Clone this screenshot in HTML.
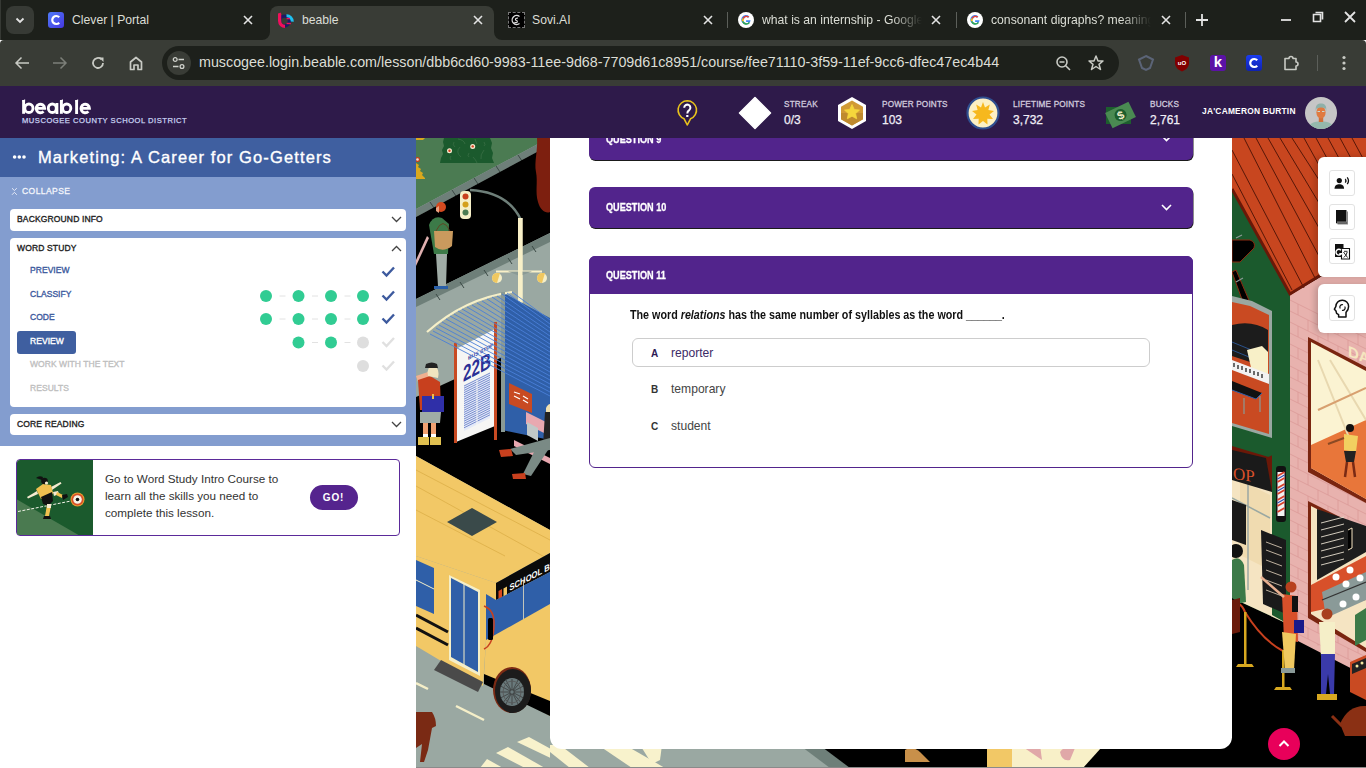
<!DOCTYPE html>
<html><head><meta charset="utf-8">
<style>
*{margin:0;padding:0;box-sizing:border-box}
html,body{width:1366px;height:768px;overflow:hidden;background:#fff;font-family:"Liberation Sans",sans-serif}
.a{position:absolute}
#tabs{left:0;top:0;width:1366px;height:40px;background:#1d201b;box-shadow:inset 1px 0 0 #363934}
#tool{left:0;top:40px;width:1366px;height:46px;background:#393c36;border-radius:4px 4px 0 0}
.tt{position:absolute;top:11px;font-size:12.2px;color:#dcded6;white-space:nowrap;line-height:18px}
.tx{position:absolute;top:13px;width:14px;height:14px}
.sep{position:absolute;top:12px;width:1px;height:16px;background:#5c5f5a}
#hdr{left:0;top:86px;width:1366px;height:52px;background:#2e1a4a}
.lbl{position:absolute;font-size:8.2px;color:#d0c9dc;letter-spacing:0.17px;-webkit-text-stroke:0.3px currentColor;line-height:10px;white-space:nowrap}
.val{position:absolute;font-size:12px;color:#f0eef6;-webkit-text-stroke:0.25px #f0eef6;line-height:14px;white-space:nowrap}
.card{font-size:8.5px;line-height:10px;color:#222;letter-spacing:0.15px;-webkit-text-stroke:0.35px #222;white-space:nowrap}
.sub{font-size:8.5px;line-height:10px;color:#3d5a9e;letter-spacing:0.05px;-webkit-text-stroke:0.35px currentColor;white-space:nowrap}
.qh{left:589px;width:604px;background:#52248c;border-radius:6px;box-shadow:0.5px 1px 0 #1a1a1a}
.qt{left:606px;font-size:11px;line-height:12px;font-weight:bold;color:#fff;-webkit-text-stroke:0.3px #fff;white-space:nowrap;transform:scaleX(0.83);transform-origin:0 0}
.optl{font-size:10px;line-height:10px;font-weight:bold;color:#333}
.opt{font-size:12.1px;line-height:16px;color:#444;white-space:nowrap}
.rb{left:1329px;width:26px;height:26px;border:1px solid #e2e2e2;border-radius:3px;background:#fff}
</style></head><body>
<!-- TAB STRIP -->
<div id="tabs" class="a">
  <div class="a" style="left:6px;top:6px;width:28px;height:28px;border-radius:8px;background:#373a35"></div>
  <svg class="a" style="left:13px;top:13px" width="14" height="14" viewBox="0 0 14 14"><path d="M3.5 5.5 L7 9 L10.5 5.5" stroke="#e3e3e3" stroke-width="1.8" fill="none"/></svg>
  <!-- tab1 -->
  <div class="a" style="left:48px;top:12px;width:16px;height:16px;border-radius:3px;background:linear-gradient(135deg,#4f7cf8,#4636e0)"></div>
  <svg class="a" style="left:48px;top:12px" width="16" height="16" viewBox="0 0 16 16"><path d="M11.2 5.3 A4 4 0 1 0 11.2 10.7" stroke="#fff" stroke-width="2.2" fill="none"/></svg>
  <div class="tt" style="left:72px">Clever | Portal</div>
  <svg class="tx" style="left:241px" viewBox="0 0 14 14"><path d="M3 3L11 11M11 3L3 11" stroke="#e3e3e3" stroke-width="1.6"/></svg>
  <!-- active tab -->
  <div class="a" style="left:270px;top:6px;width:224px;height:40px;border-radius:8px 8px 0 0;background:#393c36"></div>
  <svg class="a" style="left:262px;top:32px" width="8" height="8" viewBox="0 0 8 8"><path d="M0 8 A8 8 0 0 0 8 0 L8 8Z" fill="#393c36"/></svg>
  <svg class="a" style="left:494px;top:32px" width="8" height="8" viewBox="0 0 8 8"><path d="M8 8 A8 8 0 0 1 0 0 L0 8Z" fill="#393c36"/></svg>
  <svg class="a" style="left:274px;top:8px" width="26" height="24" viewBox="0 0 26 24"><circle cx="10.5" cy="13" r="4.9" stroke="#1c1a66" stroke-width="3.2" fill="none"/><path d="M5.6 5.5V13A5.4 5.4 0 0 0 11 18.4" stroke="#f0105a" stroke-width="3.2" fill="none"/><path d="M4 6L6.5 4.6L7.3 6.5Z" fill="#f0105a"/><path d="M12.5 7.8A5.6 5.6 0 0 1 18.3 13.6" stroke="#1ec0f0" stroke-width="3" fill="none"/><rect x="12.6" y="9.9" width="3.4" height="1.4" fill="#f0105a"/><rect x="12.6" y="14.8" width="4.3" height="1.4" fill="#f0105a"/></svg>
  <div class="tt" style="left:302px">beable</div>
  <svg class="tx" style="left:471px" viewBox="0 0 14 14"><path d="M3 3L11 11M11 3L3 11" stroke="#e3e3e3" stroke-width="1.6"/></svg>
  <!-- tab3 -->
  <div class="a" style="left:508px;top:12px;width:17px;height:16px;background:#000;border:1px dashed #777"></div>
  <svg class="a" style="left:509px;top:13px" width="15" height="14" viewBox="0 0 15 14"><path d="M10.5 3.5 A4.5 4.5 0 1 0 10.5 10.5" stroke="#ddd" stroke-width="1.3" fill="none"/><path d="M9 5 Q6 5 6.5 7 Q9 7.5 8 9.5 Q6 10 5.5 9" stroke="#ddd" stroke-width="1.1" fill="none"/></svg>
  <div class="tt" style="left:532px">Sovi.AI</div>
  <svg class="tx" style="left:701px" viewBox="0 0 14 14"><path d="M3 3L11 11M11 3L3 11" stroke="#e3e3e3" stroke-width="1.6"/></svg>
  <div class="sep" style="left:727px"></div>
  <!-- tab4 -->
  <svg class="a" style="left:738px;top:12px" width="16" height="16" viewBox="0 0 16 16"><circle cx="8" cy="8" r="8" fill="#fff"/><path d="M12.6 8.2 H8.1 V9.9 H10.8 A3 3 0 1 1 10.1 5.7 L11.3 4.5 A4.7 4.7 0 1 0 12.6 8.2Z" fill="#4285f4"/><path d="M4.6 5.9 A4.7 4.7 0 0 1 11.3 4.5 L10.1 5.7 A3 3 0 0 0 5.9 6.9Z" fill="#ea4335"/><path d="M3.9 9.6 A4.7 4.7 0 0 1 4.6 5.9 L5.9 6.9 A3 3 0 0 0 5.6 9.3Z" fill="#fbbc05"/><path d="M3.9 9.6 L5.6 9.3 A3 3 0 0 0 10.8 9.9 L12 11 A4.7 4.7 0 0 1 3.9 9.6Z" fill="#34a853"/></svg>
  <div class="tt" style="left:762px;width:160px;overflow:hidden;-webkit-mask-image:linear-gradient(90deg,#000 130px,transparent 160px)">what is an internship - Google Search</div>
  <svg class="tx" style="left:929px" viewBox="0 0 14 14"><path d="M3 3L11 11M11 3L3 11" stroke="#e3e3e3" stroke-width="1.6"/></svg>
  <div class="sep" style="left:956px"></div>
  <!-- tab5 -->
  <svg class="a" style="left:967px;top:12px" width="16" height="16" viewBox="0 0 16 16"><circle cx="8" cy="8" r="8" fill="#fff"/><path d="M12.6 8.2 H8.1 V9.9 H10.8 A3 3 0 1 1 10.1 5.7 L11.3 4.5 A4.7 4.7 0 1 0 12.6 8.2Z" fill="#4285f4"/><path d="M4.6 5.9 A4.7 4.7 0 0 1 11.3 4.5 L10.1 5.7 A3 3 0 0 0 5.9 6.9Z" fill="#ea4335"/><path d="M3.9 9.6 A4.7 4.7 0 0 1 4.6 5.9 L5.9 6.9 A3 3 0 0 0 5.6 9.3Z" fill="#fbbc05"/><path d="M3.9 9.6 L5.6 9.3 A3 3 0 0 0 10.8 9.9 L12 11 A4.7 4.7 0 0 1 3.9 9.6Z" fill="#34a853"/></svg>
  <div class="tt" style="left:991px;width:160px;overflow:hidden;-webkit-mask-image:linear-gradient(90deg,#000 130px,transparent 160px)">consonant digraphs? meaning</div>
  <svg class="tx" style="left:1159px" viewBox="0 0 14 14"><path d="M3 3L11 11M11 3L3 11" stroke="#e3e3e3" stroke-width="1.6"/></svg>
  <div class="sep" style="left:1185px"></div>
  <svg class="a" style="left:1194px;top:12px" width="16" height="16" viewBox="0 0 16 16"><path d="M8 2V14M2 8H14" stroke="#e3e3e3" stroke-width="1.8"/></svg>
  <svg class="a" style="left:1278px;top:10px" width="16" height="16" viewBox="0 0 16 16"><path d="M3 10H13" stroke="#e3e3e3" stroke-width="1.8"/></svg>
  <svg class="a" style="left:1310px;top:9px" width="16" height="16" viewBox="0 0 16 16"><path d="M5.5 3.5H12.5V10.5M3.5 5.5H10.5V12.5H3.5Z" stroke="#e3e3e3" stroke-width="1.6" fill="none"/></svg>
  <svg class="a" style="left:1342px;top:9px" width="16" height="16" viewBox="0 0 16 16"><path d="M3 3L13 13M13 3L3 13" stroke="#e3e3e3" stroke-width="1.8"/></svg>
</div>
<!-- TOOLBAR -->
<div id="tool" class="a">
  <svg class="a" style="left:13px;top:15px" width="18" height="16" viewBox="0 0 18 16"><path d="M16 8H3M8.5 2.5L3 8L8.5 13.5" stroke="#c8cac4" stroke-width="1.5" fill="none"/></svg>
  <svg class="a" style="left:51px;top:15px" width="18" height="16" viewBox="0 0 18 16"><path d="M2 8H15M9.5 2.5L15 8L9.5 13.5" stroke="#7c7f79" stroke-width="1.5" fill="none"/></svg>
  <svg class="a" style="left:89px;top:14px" width="18" height="18" viewBox="0 0 18 18"><path d="M14 9A5 5 0 1 1 12.3 5.2" stroke="#c8cac4" stroke-width="1.8" fill="none"/><path d="M10 3.5H14.5V8Z" fill="#c8cac4"/></svg>
  <svg class="a" style="left:127px;top:14px" width="18" height="18" viewBox="0 0 18 18"><path d="M3.5 15.5V8L9 3.5L14.5 8V15.5H11V11H7V15.5Z" stroke="#c8cac4" stroke-width="1.7" fill="none" stroke-linejoin="round"/></svg>
  <div class="a" style="left:162px;top:6px;width:957px;height:34px;border-radius:17px;background:#1d201b"></div>
  <div class="a" style="left:167px;top:11px;width:24px;height:24px;border-radius:12px;background:#393c36"></div>
  <svg class="a" style="left:171px;top:15px" width="16" height="16" viewBox="0 0 16 16"><circle cx="4.2" cy="4.5" r="1.9" stroke="#d0d2cc" stroke-width="1.3" fill="none"/><path d="M7.5 4.5H13M2 11.5H7.5" stroke="#d0d2cc" stroke-width="1.4"/><circle cx="11" cy="11.5" r="1.9" stroke="#d0d2cc" stroke-width="1.3" fill="none"/></svg>
  <div class="a" style="left:199px;top:13px;font-size:14.3px;line-height:18px;color:#dcded6;white-space:nowrap">muscogee.login.beable.com<span>/lesson/dbb6cd60-9983-11ee-9d68-7709d61c8951/course/fee71110-3f59-11ef-9cc6-dfec47ec4b44</span></div>
  <svg class="a" style="left:1055px;top:15px" width="17" height="17" viewBox="0 0 17 17"><circle cx="7" cy="7" r="5" stroke="#c8cac4" stroke-width="1.6" fill="none"/><path d="M4.5 7H9.5M10.7 10.7L15 15" stroke="#c8cac4" stroke-width="1.6"/></svg>
  <svg class="a" style="left:1087px;top:14px" width="18" height="18" viewBox="0 0 18 18"><path d="M9 2L11 7H16L12 10.3L13.5 15.5L9 12.5L4.5 15.5L6 10.3L2 7H7Z" stroke="#c8cac4" stroke-width="1.5" fill="none" stroke-linejoin="round"/></svg>
  <svg class="a" style="left:1137px;top:14px" width="18" height="18" viewBox="0 0 18 18"><path d="M9 2L16 5.5L13 14L9 16L5 14L2 5.5Z" stroke="#5b6477" stroke-width="2" fill="none"/></svg>
  <svg class="a" style="left:1174px;top:14px" width="16" height="18" viewBox="0 0 16 18"><path d="M8 1L15 3.5V9C15 13 12 16 8 17.5C4 16 1 13 1 9V3.5Z" fill="#800000"/><text x="8" y="11" font-size="6" font-weight="bold" fill="#fff" text-anchor="middle" font-family="Liberation Sans">uO</text></svg>
  <div class="a" style="left:1210px;top:15px;width:16px;height:16px;border-radius:3px;background:#5b12a6"></div>
  <div class="a" style="left:1210px;top:13px;width:16px;font-size:15px;line-height:18px;font-weight:bold;color:#fff;text-align:center">k</div>
  <div class="a" style="left:1246px;top:15px;width:16px;height:16px;border-radius:3px;background:linear-gradient(180deg,#1a3cf0,#0f22b0)"></div>
  <svg class="a" style="left:1246px;top:15px" width="16" height="16" viewBox="0 0 16 16"><path d="M11.2 5.3 A4 4 0 1 0 11.2 10.7" stroke="#fff" stroke-width="2.2" fill="none"/></svg>
  <svg class="a" style="left:1282px;top:14px" width="18" height="18" viewBox="0 0 18 18"><path d="M3 4.5H7A2 2 0 0 1 11 4.5H14V8A2 2 0 0 1 14 12V15.5H3Z" stroke="#c8cac4" stroke-width="1.6" fill="none" stroke-linejoin="round"/></svg>
  <div class="a" style="left:1317px;top:15px;width:1px;height:16px;background:#5c5f5a"></div>
  <svg class="a" style="left:1336px;top:14px" width="16" height="18" viewBox="0 0 16 18"><circle cx="8" cy="3.5" r="1.6" fill="#c8cac4"/><circle cx="8" cy="9" r="1.6" fill="#c8cac4"/><circle cx="8" cy="14.5" r="1.6" fill="#c8cac4"/></svg>
</div>
<!-- LEFT ILLUSTRATION -->
<svg class="a" style="left:416px;top:138px" width="134" height="630" viewBox="416 138 134 630">
 <rect x="416" y="138" width="134" height="630" fill="#9aa8a2"/>
 <!-- grass -->
 <path d="M416 138H550V137.5L416 209Z" fill="#4b7b52"/>
 <path d="M416 209L550 137.5V145L416 217Z" fill="#6e7f79"/>
 <path d="M430 202L434 208M452 190L456 196M474 178L478 184M496 166L500 172M518 155L522 161M540 143L544 149" stroke="#3a4844" stroke-width="1"/>
 <path d="M444 138H490L492 143L491 148L493 153L492 158L494 163H440L441 158L443 154L442 150L444 146L443 142Z" fill="#1b5a2d"/>
 <path d="M458 139Q464 140 465 144M454 142Q452 145 455 147M460 147Q455 152 461 157M469 153Q467 156 469 157M473 157Q476 160 477 163M484 150Q480 155 481 159M484 142Q486 145 484 146M475 139Q476 142 477 144M451 156Q449 158 451 160" stroke="#4b7b52" stroke-width="0.5" fill="none"/>
 <circle cx="449.5" cy="150.7" r="2.5" fill="#f5ecd0"/><circle cx="449.5" cy="150.7" r="1.2" fill="#d84020"/>
 <circle cx="472.7" cy="146.4" r="2.5" fill="#f5ecd0"/><circle cx="472.7" cy="146.4" r="1.2" fill="#d84020"/>
 <path d="M416 163L419 165L418 167L421 169L420 171L423 173L422 175L425 178V179H416Z" fill="#d9a81e"/><circle cx="417.5" cy="159.5" r="2.5" fill="#c8401e"/><circle cx="417.5" cy="159.5" r="1.3" fill="#f0e0d0"/><path d="M416 138H425L423 140H416Z" fill="#d9a81e"/>
 <!-- road -->
 <path d="M416 217L550 145V233L416 299Z" fill="#000"/>
 <path d="M416 299L550 233V242L416 307Z" fill="#6e7f79"/>
 <path d="M436 294L440 300M460 282L464 288M484 270L488 276M508 258L512 264M532 246L536 252" stroke="#3a4844" stroke-width="1"/>
 <path d="M550 138V212C546 214 540 210 538 202C535 192 538 182 536 172C534 162 538 150 537 138Z" fill="#7d1f0f"/>
 <!-- traffic light -->
 <path d="M470 190Q508 192 521 220" stroke="#6e7f79" stroke-width="2.5" fill="none"/>
 <rect x="460" y="191" width="11" height="28" rx="4" fill="#f5efc8"/>
 <circle cx="465.5" cy="196.5" r="3" fill="#c8401e"/><circle cx="465.5" cy="204.5" r="3" fill="#d4a01c"/><circle cx="465.5" cy="212.5" r="3" fill="#4b7b52"/>
 <rect x="518" y="218" width="4.5" height="90" fill="#f8f0c8"/>
 <path d="M496 271.5H542" stroke="#f8f0c8" stroke-width="2"/><path d="M508 271.5L520 276L532 271.5Z" fill="#8a9a95"/>
 <circle cx="497" cy="278" r="5" fill="#f5efc8"/><path d="M497 273A5 5 0 0 0 497 283L500 273Z" fill="#f0c860"/><circle cx="542" cy="278" r="5" fill="#f5efc8"/><path d="M542 273A5 5 0 0 0 542 283L545 273Z" fill="#f0c860"/><rect x="518" y="218" width="4.5" height="84" fill="#f8f0c8"/>
 <!-- woman 1 -->
 <circle cx="441" cy="207" r="5" fill="#d44a20"/><path d="M436 208L439 206V213L436 211Z" fill="#e8a080"/>
 <path d="M429 225Q433 215 442 218L449 224L448 254H434Z" fill="#3c7a48"/>
 <path d="M434 231H453L452 246Q443 253 435 247Z" fill="#c99a5e"/><path d="M436 231Q443 216 450 231" stroke="#6a3a1a" stroke-width="0.8" fill="none"/>
 <path d="M436 254H447L446 286H438Z" fill="#a0aca6"/>
 <path d="M434 286H448V289H434Z" fill="#2a5fa8"/>
 <path d="M416 260L427 236L429 238L416 266Z" fill="#e0b0b0"/>
 <!-- bus stop dark area -->
 <path d="M416 397L550 335V530L416 456Z" fill="#000"/>
 <!-- shelter -->
 <path d="M502 292L550 318V440L502 430Z" fill="#2f5fa8"/>
 <path d="M427 332Q465 298 512 292" stroke="#f5efc8" stroke-width="2.2" fill="none"/>
 
 <rect x="501" y="292" width="4" height="140" fill="#8a9a95"/>
 <path d="M456 349L495 329V426L456 442Z" fill="#f6f6f4"/>
 <rect x="454" y="343" width="3" height="100" fill="#c84a22"/>
 <rect x="494" y="322" width="3" height="118" fill="#c84a22"/>
 <text font-family="Liberation Sans" font-weight="bold" font-size="19" fill="#2a2f95" transform="translate(463 382) skewY(-28) scale(0.8 1.17)">22B</text>
 <text font-family="Liberation Sans" font-weight="bold" font-size="5" fill="#2a2f95" transform="translate(468 360) skewY(-28)">BUS STOP</text>
 <path d="M464 386L490 373V418L464 431Z" fill="#e4eaf8"/>
 <path d="M464 386.0L490 373.0M464 388.2L490 375.2M464 390.4L490 377.4M464 392.6L490 379.6M464 394.8L490 381.8M464 397.0L490 384.0M464 399.2L490 386.2M464 401.4L490 388.4M464 403.6L490 390.6M464 405.8L490 392.8M464 408.0L490 395.0M464 410.2L490 397.2M464 412.4L490 399.4M464 414.6L490 401.6M464 416.8L490 403.8M464 419.0L490 406.0M464 421.2L490 408.2M464 423.4L490 410.4M464 425.6L490 412.6M464 427.8L490 414.8" stroke="#6a80c8" stroke-width="0.9"/>
 <path d="M477 380V425" stroke="#f6f6f4" stroke-width="1"/>
 <g stroke="#4a7fd8" stroke-width="0.9">
  <path d="M430 334L550 396M433 331L550 392M436 328L550 388M439 325L550 384M442 322L550 380M446 319L550 376M450 316L550 372M454 314L550 368M458 311L550 364M462 309L550 360M467 307L550 356M472 305L550 352M477 303L550 348M482 301L550 344M487 299L550 340M492 297L550 336M497 296L550 332M502 294L550 328M507 293L550 324M512 292L550 320"/>
 </g>
 <path d="M509 383L532 394V413L509 404Z" fill="#c84a22"/><path d="M514 392L520 394M514 396L520 399M523 396L528 399M523 400L528 403" stroke="#fff" stroke-width="1.2"/>
 <!-- woman 2 -->
 <path d="M416 376L428 372L430 376L418 382Z" fill="#f0b090"/>
 <path d="M418 380L430 376L440 382L441 410H420Z" fill="#c8401e"/>
 <path d="M428 376Q426 366 434 366Q440 368 438 378Z" fill="#f0e4c0"/><path d="M425 368H438L437 364Q432 361 426 364Z" fill="#222"/>
 <path d="M422 396H444V412H422Z" fill="#2f2fa8"/><rect x="432" y="394" width="2" height="5" fill="#e8c050"/>
 <path d="M420 412H441L440 423H420Z" fill="#a0aca6"/>
 <path d="M423 423H428V437H423ZM431 423H436V437H431Z" fill="#f0a070"/>
 <path d="M423 434H428V437H423ZM431 434H436V437H431Z" fill="#fff"/>
 <path d="M418 437H429V445H418ZM430 437H441V445H430Z" fill="#e0c050"/>
 <!-- man on bench -->
 <path d="M526 412L550 424V436L526 424Z" fill="#e8a8b0"/>
 <path d="M514 440L550 458V464L514 446Z" fill="#e8a8b0"/>
 <path d="M545 412H550V446H543Z" fill="#222"/>
 <path d="M546 408Q548 404 550 404V412H546Z" fill="#f0e0b0"/>
 <path d="M527 422L538 428V441L527 435Z" fill="#c0c8c8"/>
 <path d="M550 438V450L516 455L510 449Z" fill="#7a8a85"/>
 <path d="M536 448L548 450L531 476L523 474Z" fill="#7a8a85"/>
 <path d="M499 450L511 449L513 456L501 457Z" fill="#c8401e"/>
 <path d="M512 474L525 473L526 479L513 479Z" fill="#c8401e"/>
 <!-- bus -->
 <path d="M416 456L550 530V553L496 583L416 556Z" fill="#f2c866"/>
 <path d="M416 470L550 540M416 486L550 560M416 510L505 556" stroke="#dcae48" stroke-width="0.8"/>
 <path d="M447 522L472 508L497 522L472 536Z" fill="#3a4a4a"/>
 <path d="M416 556L496 583V603L486 596V640L483 686L416 646Z" fill="#f2c866"/>
 <path d="M496 583L550 553V572L496 600Z" fill="#0a0a0a"/>
 <path d="M498.5 591L502 589V598L498.5 600Z" fill="#d84a20"/>
 <path d="M503.5 588.5L507 586.5V595.5L503.5 597.5Z" fill="#f2c866"/>
 <path d="M486 594L496 600L550 572V608L486 641Z" fill="#2f5fa8"/>
 <text font-family="Liberation Sans" font-weight="bold" font-size="9" fill="#fff" transform="translate(509.5 591) skewY(-28) scale(0.85 1)">SCHOOL BUS</text><path d="M523.5 580V622" stroke="#e8e0c0" stroke-width="0.8"/><path d="M486 641L550 608" stroke="#f5efc8" stroke-width="1"/><path d="M520 622Q535 625 550 612" stroke="#111" stroke-width="0.8" fill="none"/>
 <path d="M486 640L550 604V716L484 676Z" fill="#f2c866"/>
 <path d="M416 560L434 568V614L416 606Z" fill="#2f5fa8"/>
 <path d="M416 580L434 589" stroke="#f5efc8" stroke-width="1"/>
 <path d="M416 615L448 632M416 628L448 645" stroke="#111" stroke-width="3"/>
 <path d="M449 575L480 590V676L449 660Z" fill="#f5efc8"/>
 <path d="M451 578L478 592V672L451 657Z" fill="#2f5fa8"/>
 <path d="M464 584V665" stroke="#f5efc8" stroke-width="1"/>
 <path d="M441 660L483 682L478 692L434 670Z" fill="#4a4a4a"/>
 <path d="M484 674L550 701V716L484 684Z" fill="#000"/>
 <path d="M484 606Q495 610 494 626Q493 645 484 649" stroke="#c8401e" stroke-width="1.5" fill="none"/>
 <rect x="488" y="618" width="5" height="22" rx="1.5" fill="#000"/>
 <ellipse cx="512" cy="690" rx="19" ry="23" fill="#7a2a14"/>
 <ellipse cx="513" cy="691" rx="18" ry="22" fill="#1c1c1c"/>
 <ellipse cx="512" cy="692" rx="12" ry="14" fill="#6a7a7c"/>
 <g stroke="#333" stroke-width="0.7"><path d="M512 679V705M500 692H524M503.5 682L520.5 702M520.5 682L503.5 702M506 680L518 704M518 680L506 704M500.5 686L523.5 698M523.5 686L500.5 698"/></g><ellipse cx="512" cy="692" rx="9" ry="11" fill="none" stroke="#555" stroke-width="0.8"/><circle cx="512" cy="692" r="2.2" fill="#6a7a7c" stroke="#333" stroke-width="0.7"/>
 <!-- road marks -->
 <path d="M416 683L428 689" stroke="#f5efc8" stroke-width="2.5"/>
 <path d="M456 706L484 720" stroke="#f5efc8" stroke-width="2.5"/>
 <path d="M529 737L560 754L555 760L517 742Z" fill="#f8f2cc"/>
 <path d="M508 747L545 768H525L496 753Z" fill="#f8f2cc"/>
 <path d="M487 759L503 768H480Z" fill="#f8f2cc"/>
 <!-- deer -->
 <path d="M416 712H432Q436 718 436 726L432 728L428 750L424 762L420 762L422 744L416 748Z" fill="#7a2a14"/>
 <rect x="416" y="767" width="134" height="1" fill="#8a8a8a"/>
</svg>
<!-- RIGHT ILLUSTRATION -->
<svg class="a" style="left:1232px;top:138px" width="134" height="630" viewBox="1232 138 134 630">
 <defs><clipPath id="rc"><rect x="1232" y="138" width="134" height="630"/></clipPath></defs>
 <g clip-path="url(#rc)">
 <rect x="1232" y="138" width="134" height="630" fill="#000"/>
 <!-- green wall -->
 <path d="M1232 189L1290 295V625L1232 598Z" fill="#1b5a2d"/>
 <!-- pink wall -->
 <path d="M1290 295L1366 250V680L1290 640Z" fill="#e8b2ae"/>
 <g stroke="#dc9a98" stroke-width="0.8"><path d="M1290 300L1366 338M1290 311L1366 349M1290 322L1366 360M1290 333L1366 371M1290 344L1366 382M1290 355L1366 393M1290 366L1366 404M1290 377L1366 415M1290 388L1366 426M1290 399L1366 437M1290 410L1366 448M1290 421L1366 459M1290 432L1366 470M1290 443L1366 481M1290 454L1366 492M1290 465L1366 503M1290 476L1366 514M1290 487L1366 525M1290 498L1366 536M1290 509L1366 547M1290 520L1366 558M1290 531L1366 569M1290 542L1366 580M1290 553L1366 591M1290 564L1366 602M1290 575L1366 613M1290 586L1366 624M1290 597L1366 635M1290 608L1366 646M1290 619L1366 657M1290 630L1366 668M1290 641L1366 679M1290 652L1366 690M1290 663L1366 701M1290 674L1366 712M1290 685L1366 723M1290 696L1366 734"/><path d="M1298 304.0V315.0M1318 314.0V325.0M1338 324.0V335.0M1358 334.0V345.0M1308 320.0V331.0M1328 330.0V341.0M1348 340.0V351.0M1298 326.0V337.0M1318 336.0V347.0M1338 346.0V357.0M1358 356.0V367.0M1308 342.0V353.0M1328 352.0V363.0M1348 362.0V373.0M1298 348.0V359.0M1318 358.0V369.0M1338 368.0V379.0M1358 378.0V389.0M1308 364.0V375.0M1328 374.0V385.0M1348 384.0V395.0M1298 370.0V381.0M1318 380.0V391.0M1338 390.0V401.0M1358 400.0V411.0M1308 386.0V397.0M1328 396.0V407.0M1348 406.0V417.0M1298 392.0V403.0M1318 402.0V413.0M1338 412.0V423.0M1358 422.0V433.0M1308 408.0V419.0M1328 418.0V429.0M1348 428.0V439.0M1298 414.0V425.0M1318 424.0V435.0M1338 434.0V445.0M1358 444.0V455.0M1308 430.0V441.0M1328 440.0V451.0M1348 450.0V461.0M1298 436.0V447.0M1318 446.0V457.0M1338 456.0V467.0M1358 466.0V477.0M1308 452.0V463.0M1328 462.0V473.0M1348 472.0V483.0M1298 458.0V469.0M1318 468.0V479.0M1338 478.0V489.0M1358 488.0V499.0M1308 474.0V485.0M1328 484.0V495.0M1348 494.0V505.0M1298 480.0V491.0M1318 490.0V501.0M1338 500.0V511.0M1358 510.0V521.0M1308 496.0V507.0M1328 506.0V517.0M1348 516.0V527.0M1298 502.0V513.0M1318 512.0V523.0M1338 522.0V533.0M1358 532.0V543.0M1308 518.0V529.0M1328 528.0V539.0M1348 538.0V549.0M1298 524.0V535.0M1318 534.0V545.0M1338 544.0V555.0M1358 554.0V565.0M1308 540.0V551.0M1328 550.0V561.0M1348 560.0V571.0M1298 546.0V557.0M1318 556.0V567.0M1338 566.0V577.0M1358 576.0V587.0M1308 562.0V573.0M1328 572.0V583.0M1348 582.0V593.0M1298 568.0V579.0M1318 578.0V589.0M1338 588.0V599.0M1358 598.0V609.0M1308 584.0V595.0M1328 594.0V605.0M1348 604.0V615.0M1298 590.0V601.0M1318 600.0V611.0M1338 610.0V621.0M1358 620.0V631.0M1308 606.0V617.0M1328 616.0V627.0M1348 626.0V637.0M1298 612.0V623.0M1318 622.0V633.0M1338 632.0V643.0M1358 642.0V653.0M1308 628.0V639.0M1328 638.0V649.0M1348 648.0V659.0M1298 634.0V645.0M1318 644.0V655.0M1338 654.0V665.0M1358 664.0V675.0M1308 650.0V661.0M1328 660.0V671.0M1348 670.0V681.0M1298 656.0V667.0M1318 666.0V677.0M1338 676.0V687.0M1358 686.0V697.0M1308 672.0V683.0M1328 682.0V693.0M1348 692.0V703.0M1298 678.0V689.0M1318 688.0V699.0M1338 698.0V709.0M1358 708.0V719.0M1308 694.0V705.0M1328 704.0V715.0M1348 714.0V725.0M1298 700.0V711.0M1318 710.0V721.0M1338 720.0V731.0M1358 730.0V741.0"/></g>
 <text font-family="Liberation Sans" font-weight="bold" font-size="15" fill="#f5e6c0" transform="translate(1348 356) skewY(22)">DA</text>
 <!-- roof -->
 <path d="M1232 138H1366V247L1290 295L1232 189Z" fill="#c8461f"/>
 <g stroke="#4a1206" stroke-width="0.9">
  <path d="M1232 150L1304 288M1244 138L1316 280M1256 138L1328 273M1268 138L1340 265M1280 138L1352 258M1292 138L1364 250M1304 138L1366 250M1316 138L1366 230M1328 138L1366 208M1340 138L1366 186M1352 138L1366 164M1232 174L1292 290"/>
 </g>
 <path d="M1232 189L1290 294L1366 247" stroke="#6a1808" stroke-width="3" fill="none"/>
 <!-- piano area -->
 <path d="M1232 240H1250Q1256 242 1254 248L1240 262H1232Z" fill="#000" stroke="#8a2a10" stroke-width="1"/>
 <path d="M1232 272L1236 270L1254 312L1248 316Z" fill="#000" stroke="#8a2a10" stroke-width="1"/>
 <path d="M1236 238L1242 235M1236 282L1243 278" stroke="#8a9a95" stroke-width="1.2"/>
 <path d="M1232 296L1252 301L1272 311V438L1232 426Z" fill="#9aa8a2"/>
 <path d="M1232 302L1250 306L1269 315V434L1232 423Z" fill="#c94a22"/>
 <path d="M1232 325Q1252 320 1268 330V368L1232 356Z" fill="#1c1c1c"/>
 <path d="M1232 342L1266 356M1232 350L1266 364" stroke="#2f5fa8" stroke-width="0.8"/>
 <path d="M1247 350L1262 346L1268 352V374L1252 372Z" fill="#f8f0c8"/>
 <path d="M1232 360L1269 374V384L1232 370Z" fill="#f2f2f2"/>
 <path d="M1234 363V367M1238 365V369M1242 366V370M1246 368V372M1250 369V373M1254 371V375M1258 372V376M1262 374V378" stroke="#111" stroke-width="1.2"/>
 <path d="M1232 381L1262 393L1256 399L1232 390Z" fill="#111"/>
 <path d="M1232 390L1256 399L1262 393" stroke="#2f5fa8" stroke-width="1" fill="none"/>
 <path d="M1244 398V414M1260 396V412" stroke="#8a9a95" stroke-width="1.2"/>
 <path d="M1232 446L1272 458V466L1232 456Z" fill="#6a1808"/>
 <!-- shop -->
 <path d="M1232 470L1290 500V625L1232 598Z" fill="#f5e4c2"/>
 <path d="M1240 480L1270 495V570L1240 555Z" fill="#eed7a8" opacity="0.7"/>
 <path d="M1248 482V590M1232 498L1270 518" stroke="#9aa8a2" stroke-width="1.5"/>
 <path d="M1232 450L1266 458L1272 462V492L1232 480Z" fill="#1a1a1a"/>
 <path d="M1266 458L1275 454V486L1272 492Z" fill="#6a1808"/>
 <text font-family="Liberation Serif" font-size="17" fill="#d8502a" transform="translate(1233 479) skewY(8)">OP</text>
 <path d="M1232 500L1246 505V545L1232 540Z" fill="#1a1a1a"/>
 <path d="M1272 450H1290V625L1272 615Z" fill="#1b5a2d"/>
 <rect x="1276" y="466" width="10" height="56" rx="3" fill="#111"/>
 <rect x="1277.5" y="472" width="7" height="44" fill="#f2f2f2"/>
 <path d="M1277.5 476L1284.5 472M1277.5 482L1284.5 478M1277.5 488L1284.5 484M1277.5 494L1284.5 490M1277.5 500L1284.5 496M1277.5 506L1284.5 502M1277.5 512L1284.5 508" stroke="#d8402a" stroke-width="1.8"/>
 <path d="M1277.5 479L1284.5 475M1277.5 491L1284.5 487M1277.5 503L1284.5 499" stroke="#2f4fb0" stroke-width="1.2"/>
 <path d="M1261 530L1286 540V614L1263 604Z" fill="#1a1a1a"/>
 <g stroke="#e8d8c0" stroke-width="0.8"><path d="M1266 542L1282 548M1266 550L1282 556M1266 560L1282 566M1266 570L1282 576M1266 580L1282 586M1266 590L1282 596"/></g>
 <path d="M1232 560Q1240 555 1244 565L1246 602L1232 605Z" fill="#3c7a48"/>
 <circle cx="1236" cy="551" r="7" fill="#111"/>
 <!-- dance window -->
 <path d="M1308 337L1366 367V503L1308 472Z" fill="#7a2510"/>
 <path d="M1311 342L1366 371V499L1311 468Z" fill="#fbf3d2"/>
 <path d="M1311 445L1366 420V499L1311 468Z" fill="#e8763a"/>
 <path d="M1318 360L1350 440M1330 360L1366 420" stroke="#e8d8b0" stroke-width="2"/>
 <path d="M1318 410L1366 388" stroke="#d8a070" stroke-width="2"/>
 <circle cx="1350" cy="428" r="4" fill="#111"/>
 <path d="M1344 434L1358 436L1356 452L1344 450Z" fill="#f2d060"/>
 <path d="M1344 451H1356L1354 462H1346Z" fill="#222"/>
 <path d="M1347 462L1345 477M1353 462L1355 477" stroke="#7a2a14" stroke-width="2.5"/>
 <path d="M1344 438L1328 444" stroke="#8a4a24" stroke-width="2"/>
 <!-- cafe window -->
 <path d="M1308 501L1366 530V652L1308 618Z" fill="#7a2510"/>
 <path d="M1311 506L1366 534V648L1311 614Z" fill="#f5e4c2"/>
 <path d="M1317 509L1366 526V552L1317 580Z" fill="#1e1e1e"/>
 <g stroke="#e8e0d0" stroke-width="0.9"><path d="M1321 523L1344 517M1321 530L1344 524M1321 537L1344 531M1321 544L1344 538M1321 551L1344 545M1321 558L1344 552M1321 565L1344 559"/></g>
 <path d="M1348 530L1352 528V548L1348 550" stroke="#f5e4c2" stroke-width="1"/>
 <path d="M1311 585L1366 556V600L1311 612Z" fill="#d8502a"/>
 <path d="M1322 592L1366 572V600L1326 618Z" fill="#8a9a98"/>
 <path d="M1322 600L1366 582" stroke="#333" stroke-width="1.2"/>
 <circle cx="1336" cy="577" r="3.5" fill="#fff"/><circle cx="1350" cy="570" r="3.5" fill="#fff"/><circle cx="1346" cy="584" r="3.5" fill="#fff"/><circle cx="1360" cy="578" r="3.5" fill="#fff"/><circle cx="1343" cy="604" r="3.5" fill="#fff"/><circle cx="1356" cy="597" r="3.5" fill="#fff"/>
 <path d="M1355 615L1366 608V640L1355 646Z" fill="#3c7a48"/>
 <path d="M1320 646L1366 670V680L1296 642Z" fill="#e8b2ae"/>
 <!-- bottom -->
 <path d="M1232 598L1296 640L1366 676V768H1232Z" fill="#000"/>
 <path d="M1350 662L1366 655V700L1350 692Z" fill="#c94a22"/>
 <path d="M1352 664L1366 658V668L1352 674Z" fill="#222"/>
 <circle cx="1357" cy="666" r="1.5" fill="#f5e8a0"/><circle cx="1362" cy="663" r="1.5" fill="#f5e8a0"/>
 <!-- posts / people -->
 <path d="M1232 605Q1240 600 1245 612Q1262 640 1283 651" stroke="#c8401e" stroke-width="2" fill="none"/>
 <rect x="1244" y="612" width="2.5" height="52" fill="#d8a820"/><path d="M1238 664H1252L1254 667H1236Z" fill="#d8a820"/>
 <rect x="1282" y="650" width="2.5" height="37" fill="#d8a820"/><path d="M1276 687H1290L1292 690H1274Z" fill="#d8a820"/>
 <path d="M1232 600L1240 598V632L1232 634Z" fill="#6a1a0a"/>
 <g transform="translate(-2 32)">
 <circle cx="1293" cy="555" r="5.5" fill="#b8401e"/>
 <path d="M1284 562L1299 564L1300 610L1286 608Z" fill="#d8502a"/>
 <path d="M1294 564L1300 564L1300 580L1294 580Z" fill="#111"/>
 <rect x="1296" y="588" width="10" height="13" fill="#1a1a8a"/>
 <path d="M1284 600L1298 602L1296 638L1287 638Z" fill="#f0c860"/>
 <path d="M1283 636H1297V641H1283Z" fill="#8a9a98"/>
 <path d="M1263 545L1286 565" stroke="#e8b090" stroke-width="2.5"/>
 </g>
 <g transform="translate(1 24)">
 <circle cx="1326" cy="590" r="5.5" fill="#a8401e"/>
 <path d="M1318 598L1334 598L1334 632L1320 632Z" fill="#f5efc8"/>
 <path d="M1320 630H1334L1333 670H1329L1327 650L1325 670H1320Z" fill="#3a3aaa"/>
 <path d="M1316 670H1336V676H1316Z" fill="#d8a820"/>
 </g>
 <path d="M1340 724Q1348 705 1366 706V736H1345Z" fill="#8a3014"/>
 <path d="M1332 716L1342 726" stroke="#8a3014" stroke-width="3"/>
 <rect x="1232" y="767" width="134" height="1" fill="#8a8a8a"/>
 </g>
</svg>
<!-- right tool rail -->
<div class="a" style="left:1318px;top:157px;width:60px;height:120px;border-radius:6px;background:#fff;box-shadow:-3px 0 6px rgba(0,0,0,0.18)"></div>
<div class="a" style="left:1318px;top:284px;width:60px;height:49px;border-radius:6px;background:#fff;box-shadow:-3px 0 6px rgba(0,0,0,0.18)"></div>
<div class="a rb" style="top:169.5px"></div>
<div class="a rb" style="top:204px"></div>
<div class="a rb" style="top:238px"></div>
<div class="a rb" style="top:294.8px"></div>
<svg class="a" style="left:1333px;top:174px" width="18" height="16" viewBox="0 0 18 16"><circle cx="6.3" cy="6.6" r="2.6" fill="#111"/><path d="M1.5 14.8C1.5 11.3 3.8 10.2 6.3 10.2C8.8 10.2 11.1 11.3 11.1 14.8Z" fill="#111"/><path d="M12.3 5Q13.6 6.8 12.3 8.6M14.2 3.4Q16.8 6.8 14.2 10.2" stroke="#111" stroke-width="1.3" fill="none"/></svg>
<svg class="a" style="left:1335px;top:209px" width="14" height="16" viewBox="0 0 14 16"><path d="M1 1H11.5V14H1Z" fill="#111"/><path d="M11.5 2.5H13V15.5H2.5V14H11.5Z" fill="#888"/><path d="M2 13.2H11" stroke="#fff" stroke-width="0.8"/><path d="M1 14H12" stroke="#111" stroke-width="0.6"/></svg>
<svg class="a" style="left:1334px;top:243px" width="17" height="17" viewBox="0 0 17 17"><path d="M1 1H9.5V14H1Z" fill="#111"/><path d="M7.5 5.5H15.5V16H7.5Z" fill="#fff" stroke="#111" stroke-width="1.1"/><path d="M7 7.2A2.9 2.9 0 1 0 7.3 10.8H5.3" stroke="#fff" stroke-width="1.4" fill="none"/><path d="M9.5 9L13.5 14.5M13.2 9Q12.5 12.5 9.8 14.5M10 8.3H13.5" stroke="#111" stroke-width="0.9" fill="none"/></svg>
<svg class="a" style="left:1330px;top:296px" width="22" height="24" viewBox="1330 296 22 24"><path d="M1338.6 317V314.6L1336.6 313.4L1336 311L1334.4 309.2L1335.8 306.6Q1336.4 300.4 1342.2 300.2A6.2 6.2 0 0 1 1348.6 306.6Q1348.6 310 1346 312.4V317Z" stroke="#111" stroke-width="1.5" fill="none" stroke-linejoin="round"/><path d="M1340.3 308.5A2.4 2.4 0 0 1 1343 304.8M1344.7 306.5A2.4 2.4 0 0 1 1342 310.2" stroke="#111" stroke-width="1.2" fill="none"/></svg>
<!-- scroll top button -->
<div class="a" style="left:1268px;top:728px;width:32px;height:32px;border-radius:16px;background:#e8005a"></div>
<svg class="a" style="left:1276px;top:736px" width="16" height="16" viewBox="0 0 16 16"><path d="M3.5 10L8 5.5L12.5 10" stroke="#fff" stroke-width="2" fill="none"/></svg>
<svg class="a" style="left:550px;top:738px" width="682" height="30" viewBox="550 738 682 30">
 <rect x="550" y="738" width="682" height="30" fill="#000"/>
 <path d="M550 738H790L835 768H550Z" fill="#9aa8a2"/>
 <path d="M790 738H810L850 768H830Z" fill="#6e7f79"/>
 <path d="M560 745L590 768H570L550 752V745Z" fill="#f8f2cc"/>
 <path d="M585 745L618 745L650 768H618Z" fill="#f8f2cc" opacity="0"/>
 <path d="M598 745H625L665 768H632Z" fill="#f8f2cc"/>
 <path d="M640 745H662L660 760L652 764Z" fill="#f8f2cc"/>
 <path d="M987 738H1012V768H987Z" fill="#f2c866"/>
 <path d="M1012 738H1110L1083 768H1012Z" fill="#f8f0c8"/>
 <path d="M1020 745L1042 760L1040 745Z" fill="#e0a8a8"/>
 <path d="M1060 752Q1065 745 1075 748L1070 760Q1062 762 1060 752Z" fill="#e0a8a8"/>
 <path d="M905 750Q912 745 920 752L930 762H905Z" fill="#c8904a"/>
 <rect x="550" y="767" width="682" height="1" fill="#8a8a8a"/>
</svg>
<!-- MAIN PANEL -->
<div class="a" style="left:550px;top:120px;width:682px;height:629px;background:#fff;border-radius:0 0 12px 12px"></div>
<div class="a qh" style="top:119px;height:40.5px"></div>
<div class="a qt" style="top:132.5px">QUESTION 9</div>
<svg class="a" style="left:1161px;top:135px" width="11" height="7" viewBox="0 0 11 7"><path d="M1 1L5.5 5.5L10 1" stroke="#fff" stroke-width="1.6" fill="none"/></svg>
<div class="a qh" style="top:187px;height:40.5px"></div>
<div class="a qt" style="top:200.5px">QUESTION 10</div>
<svg class="a" style="left:1161px;top:204px" width="11" height="7" viewBox="0 0 11 7"><path d="M1 1L5.5 5.5L10 1" stroke="#fff" stroke-width="1.6" fill="none"/></svg>
<div class="a" style="left:589px;top:255.5px;width:604px;height:212.5px;border:1.5px solid #52248c;border-radius:6px;background:#fff"></div>
<div class="a" style="left:589px;top:255.5px;width:604px;height:38.5px;background:#52248c;border-radius:6px 6px 0 0"></div>
<div class="a qt" style="top:268.5px">QUESTION 11</div>
<div class="a" id="qtext" style="left:630px;top:307.5px;font-size:12px;line-height:14px;font-weight:bold;color:#111;white-space:nowrap;transform:scaleX(0.895);transform-origin:0 0">The word <i>relations</i> has the same number of syllables as the word ______.</div>
<div class="a" style="left:632px;top:337.6px;width:518px;height:29.4px;border:1px solid #cdcdcd;border-radius:6px"></div>
<div class="a optl" style="left:651px;top:348.5px;color:#2d1a55">A</div>
<div class="a opt" id="o1" style="left:671px;top:345px;color:#3c2a66">reporter</div>
<div class="a optl" style="left:651px;top:385px">B</div>
<div class="a opt" id="o2" style="left:671px;top:381px">temporary</div>
<div class="a optl" style="left:651px;top:422px">C</div>
<div class="a opt" id="o3" style="left:671px;top:418px">student</div>
<!-- BEABLE HEADER -->
<div id="hdr" class="a"></div>
  <svg class="a" style="left:20px;top:97px" width="74" height="19" viewBox="20 97 74 19"><g fill="none" stroke="#fff" stroke-width="2.9"><path d="M23.6 100V113.8"/><ellipse cx="28.9" cy="108.25" rx="4.1" ry="4.3"/><path d="M36.1 108.4H44.6A4.2 4.3 0 1 0 43.5 111.4"/><ellipse cx="52.3" cy="108.25" rx="4.0" ry="4.3"/><path d="M56.9 103V114"/><path d="M61.4 100V113.8"/><ellipse cx="66.7" cy="108.25" rx="4.1" ry="4.3"/><path d="M76.6 100V114"/><path d="M80.9 108.4H89.4A4.2 4.3 0 1 0 88.3 111.4"/></g><path d="M22.1 100.8L25.1 99.2V101.5H22.1Z M59.9 100.8L62.9 99.2V101.5H59.9Z M75.1 100.8L78.1 99.2V101.5H75.1Z" fill="#fff"/></svg>
  <div class="a" style="left:22px;top:116px;font-size:7.6px;color:#c9d3f2;line-height:9px;letter-spacing:0.51px;white-space:nowrap;-webkit-text-stroke:0.25px #c9d3f2" id="dist">MUSCOGEE COUNTY SCHOOL DISTRICT</div>
  <svg class="a" style="left:676px;top:99px" width="22" height="28" viewBox="676 99 22 28"><path d="M687.3 100.8A9.3 9.3 0 0 1 690.5 118.8L687.3 125L684.1 118.8A9.3 9.3 0 0 1 687.3 100.8Z" stroke="#e9c41c" stroke-width="1.6" fill="none" stroke-linejoin="round"/><path d="M684.2 107.8A3.1 3.1 0 1 1 689.2 110.2Q687.3 111.5 687.3 113.6" stroke="#fff" stroke-width="2" fill="none"/><rect x="686.2" y="115" width="2.2" height="2" fill="#fff"/></svg>
  <svg class="a" style="left:738px;top:96px" width="34" height="34" viewBox="0 0 34 34"><path d="M17 1.5L32.5 17L17 32.5L1.5 17Z" fill="#fff" stroke="#fff" stroke-width="1.5" stroke-linejoin="round"/></svg>
  <div class="lbl" style="left:784px;top:100px" id="l1">STREAK</div>
  <div class="val" style="left:784px;top:113px" id="v1">0/3</div>
  <svg class="a" style="left:837px;top:96px" width="30" height="34" viewBox="0 0 30 34"><path d="M15 1L29 9V25L15 33L1 25V9Z" fill="#fff"/><path d="M15 4.5L26 10.8V23.2L15 29.5L4 23.2V10.8Z" fill="#d19a35"/><path d="M4 17H26V23.2L15 29.5L4 23.2Z" fill="#bf8a2e"/><path d="M15 8.5L17.3 13.5L22.5 14.1L18.6 17.6L19.7 22.8L15 20.2L10.3 22.8L11.4 17.6L7.5 14.1L12.7 13.5Z" fill="#f5d63c" stroke="#f5d63c" stroke-width="0.8" stroke-linejoin="round"/></svg>
  <div class="lbl" style="left:882px;top:100px" id="l2">POWER POINTS</div>
  <div class="val" style="left:882px;top:113px" id="v2">103</div>
  <svg class="a" style="left:966px;top:96px" width="34" height="34" viewBox="0 0 34 34"><circle cx="17" cy="17" r="15.5" fill="#fcf0c4" stroke="#2f4f90" stroke-width="2.2"/><path d="M17 6L19 11.5L23.8 8.6L22.4 14L28 15L23.5 18.6L27 23L21.3 22.8L21.5 28.5L17 25L12.5 28.5L12.7 22.8L7 23L10.5 18.6L6 15L11.6 14L10.2 8.6L15 11.5Z" fill="#f6b81e"/></svg>
  <div class="lbl" style="left:1013px;top:100px" id="l3">LIFETIME POINTS</div>
  <div class="val" style="left:1013px;top:113px" id="v3">3,732</div>
  <svg class="a" style="left:1103px;top:96px" width="34" height="34" viewBox="0 0 34 34"><rect x="3" y="11" width="25" height="17" fill="#1d5e2e"/><g transform="rotate(-26 17.5 19)"><rect x="4.5" y="10.5" width="26" height="17" fill="#4a8a52"/><circle cx="17.5" cy="19" r="6" fill="#1d5e2e"/><text x="17.5" y="23.2" font-family="Liberation Sans" font-weight="bold" font-size="11.5" fill="#f0ecc8" text-anchor="middle">$</text></g></svg>
  <div class="lbl" style="left:1150px;top:100px" id="l4">BUCKS</div>
  <div class="val" style="left:1150px;top:113px" id="v4">2,761</div>
  <div class="lbl" style="left:1202px;top:106px;color:#fff;font-size:8.4px;letter-spacing:0.22px;font-weight:bold;-webkit-text-stroke:0" id="name">JA'CAMERON BURTIN</div>
  <svg class="a" style="left:1305px;top:97px" width="32" height="32" viewBox="0 0 32 32"><defs><clipPath id="avc"><circle cx="16" cy="16" r="16"/></clipPath></defs><circle cx="16" cy="16" r="16" fill="#c6c6c6"/><g clip-path="url(#avc)"><path d="M3 32C4 26 9 24.5 16 24.5C23 24.5 28 26 29 32Z" fill="#94b8ac"/><rect x="13.8" y="20" width="4.4" height="5" fill="#d0703a"/><ellipse cx="16" cy="15.5" rx="4.6" ry="6" fill="#e07a40"/><path d="M10.8 14C10 8 13 6.5 16 6.5C19 6.5 22 8 21.2 14L20.5 11.5Q16 9.5 11.5 11.5Z" fill="#8fb0a8"/><path d="M12.5 14.5H15M17 14.5H19.5" stroke="#c8d8d0" stroke-width="1"/></g></svg>

<!-- SIDEBAR -->
<div class="a" style="left:0;top:138px;width:416px;height:39px;background:#3f5fa0"></div>
<div class="a" style="left:0;top:177px;width:416px;height:269px;background:#839dcf"></div>
<svg class="a" style="left:12px;top:154px" width="16" height="6" viewBox="0 0 16 6"><circle cx="2.6" cy="3" r="1.8" fill="#fff"/><circle cx="7.3" cy="3" r="1.8" fill="#fff"/><circle cx="12" cy="3" r="1.8" fill="#fff"/></svg>
<div class="a" id="title" style="left:38px;top:147px;font-size:16.5px;line-height:20px;color:#fff;white-space:nowrap;letter-spacing:1.12px;-webkit-text-stroke:0.35px #fff">Marketing: A Career for Go-Getters</div>
<svg class="a" style="left:11px;top:187px" width="7" height="9" viewBox="0 0 7 9"><path d="M1 1.2L3.4 3.5L5.8 1.2M1 7.8L3.4 5.3L5.8 7.8" stroke="#eef1fa" stroke-width="0.9" fill="none"/></svg>
<div class="a" id="coll" style="left:22px;top:186px;font-size:8.5px;line-height:10px;color:#f3f5fb;letter-spacing:0.44px;-webkit-text-stroke:0.3px #f3f5fb">COLLAPSE</div>
<div class="a" style="left:10px;top:209px;width:396px;height:22px;border-radius:4px;background:#fff"></div>
<div class="a card" style="left:17px;top:214px">BACKGROUND INFO</div>
<svg class="a chev" style="left:391px;top:216px" width="11" height="7" viewBox="0 0 11 7"><path d="M1 1L5.5 5.5L10 1" stroke="#444" stroke-width="1.3" fill="none"/></svg>
<div class="a" style="left:10px;top:238px;width:396px;height:169px;border-radius:4px;background:#fff"></div>
<div class="a card" style="left:17px;top:243px">WORD STUDY</div>
<svg class="a chev" style="left:391px;top:245px" width="11" height="7" viewBox="0 0 11 7"><path d="M1 6L5.5 1.5L10 6" stroke="#444" stroke-width="1.3" fill="none"/></svg>
<div class="a" style="left:17px;top:331px;width:59px;height:23px;border-radius:3px;background:#3f5fa0"></div>
<div class="a sub" style="left:30px;top:265px">PREVIEW</div>
<div class="a sub" style="left:30px;top:289px">CLASSIFY</div>
<div class="a sub" style="left:30px;top:312px">CODE</div>
<div class="a sub" style="left:30px;top:336px;color:#fff">REVIEW</div>
<div class="a sub" style="left:30px;top:359px;color:#bfbfbf">WORK WITH THE TEXT</div>
<div class="a sub" style="left:30px;top:383px;color:#bfbfbf">RESULTS</div>
<svg class="a" style="left:250px;top:262px" width="150" height="112" viewBox="250 262 150 112">
 <g fill="#31cc93">
  <circle cx="266" cy="296" r="6"/><circle cx="298.5" cy="296" r="6"/><circle cx="331" cy="296" r="6"/><circle cx="363" cy="296" r="6"/>
  <circle cx="266" cy="319" r="6"/><circle cx="298.5" cy="319" r="6"/><circle cx="331" cy="319" r="6"/><circle cx="363" cy="319" r="6"/>
  <circle cx="298.5" cy="342.5" r="6"/><circle cx="331" cy="342.5" r="6"/>
 </g>
 <g fill="#dedede"><circle cx="363" cy="342.5" r="6"/><circle cx="363" cy="366" r="6"/></g>
 <g stroke="#e2e2e2" stroke-width="1">
  <path d="M279.5 296H285.5M312 296H318M344.5 296H350.5M279.5 319H285.5M312 319H318M344.5 319H350.5M312 342.5H318M344.5 342.5H350.5"/>
 </g>
 <g fill="none" stroke-width="2.4" stroke-linecap="butt">
  <path d="M382.5 271.5L386.5 275.5L394 267.5" stroke="#3d5a9e"/>
  <path d="M382.5 295.5L386.5 299.5L394 291.5" stroke="#3d5a9e"/>
  <path d="M382.5 318.5L386.5 322.5L394 314.5" stroke="#3d5a9e"/>
  <path d="M382.5 342L386.5 346L394 338" stroke="#e0e0e0"/>
  <path d="M382.5 365.5L386.5 369.5L394 361.5" stroke="#e0e0e0"/>
 </g>
</svg>
<div class="a" style="left:10px;top:414px;width:396px;height:21px;border-radius:4px;background:#fff"></div>
<div class="a card" style="left:17px;top:419px">CORE READING</div>
<svg class="a chev" style="left:391px;top:421px" width="11" height="7" viewBox="0 0 11 7"><path d="M1 1L5.5 5.5L10 1" stroke="#444" stroke-width="1.3" fill="none"/></svg>
<!-- promo -->
<div class="a" style="left:16px;top:459px;width:384px;height:77px;border:1.5px solid #5b2a9a;border-radius:4px;overflow:hidden;background:#fff">
 <svg class="a" style="left:0;top:0" width="76" height="76" viewBox="16 459 76 76">
  <rect x="16" y="459" width="76" height="77" fill="#1b5a2d"/>
  <path d="M16 498.5L81 536H16Z" fill="#4a7a50"/>
  <path d="M17 510.5L70 500" stroke="#f2f2e8" stroke-width="1" stroke-dasharray="3 1.5"/>
  <circle cx="76.5" cy="498.5" r="7" fill="#e8a030"/>
  <circle cx="76.5" cy="498.5" r="6" fill="#d8502a"/><circle cx="76.5" cy="498.5" r="4.3" fill="#f8f4e8"/><circle cx="76.5" cy="498.5" r="1.8" fill="#111"/>
  <path d="M36 490L26 496L27 497.5L37 493Z" fill="#f5ead0"/>
  <path d="M50 486L59.5 481L60.5 482.5L51 489Z" fill="#f5ead0"/>
  <path d="M35 488L42 483L50 484L52 492L48 498L40 498Z" fill="#f0c050"/>
  <path d="M40 496L51 491L52 500L47 505L42 503Z" fill="#111"/>
  <path d="M52 491L57 490L58 493L53 495Z" fill="#f5ead0"/>
  <path d="M56 491L62 494L61 497L55 494Z" fill="#f0c050"/>
  <path d="M61 494L66 493L67 496L62 499Z" fill="#111"/>
  <path d="M46 504L50 505L48 515L44 515Z" fill="#f0c050"/>
  <path d="M46 503H50V507H46Z" fill="#f5ead0"/>
  <path d="M43 515H49L50 518H42Z" fill="#111"/>
  <circle cx="43.5" cy="480" r="3.3" fill="#111"/>
  <path d="M35 477Q38 474 42 476L41 479Z" fill="#111"/>
  <circle cx="45.5" cy="482" r="1.6" fill="#f5ead0"/>
 </svg>
 <div class="a" id="promo" style="left:88px;top:9.5px;width:200px;font-size:11.7px;line-height:17px;color:#333">Go to Word Study Intro Course to learn all the skills you need to complete this lesson.</div>
 <div class="a" style="left:292.5px;top:24.5px;width:48px;height:25px;border-radius:13px;background:#55248e"></div>
 <div class="a" id="go" style="left:292.5px;top:32px;width:48px;text-align:center;font-size:10px;line-height:12px;font-weight:bold;color:#fff;letter-spacing:0.8px">GO!</div>
</div>
</body></html>
